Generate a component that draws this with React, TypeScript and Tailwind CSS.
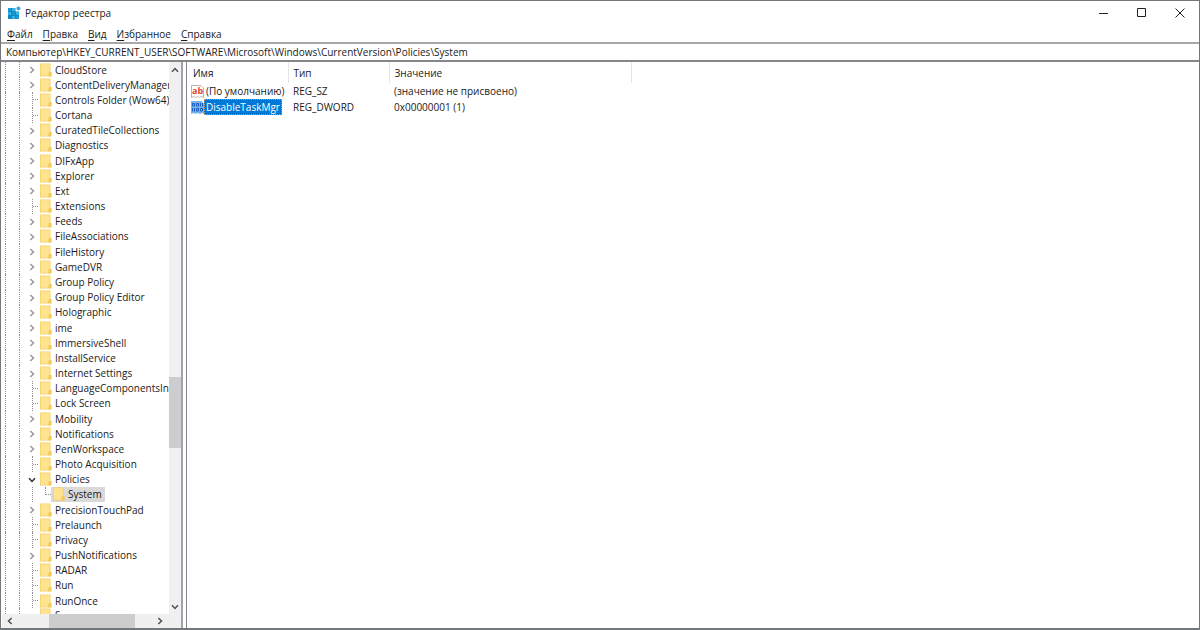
import clsx from 'clsx'

type Kind = 'closed' | 'open' | 'leaf' | 'child'

const keys: { name: string; kind: Kind }[] = [
  { name: 'CloudStore', kind: 'closed' },
  { name: 'ContentDeliveryManager', kind: 'closed' },
  { name: 'Controls Folder (Wow64)', kind: 'leaf' },
  { name: 'Cortana', kind: 'leaf' },
  { name: 'CuratedTileCollections', kind: 'closed' },
  { name: 'Diagnostics', kind: 'closed' },
  { name: 'DIFxApp', kind: 'closed' },
  { name: 'Explorer', kind: 'closed' },
  { name: 'Ext', kind: 'closed' },
  { name: 'Extensions', kind: 'leaf' },
  { name: 'Feeds', kind: 'closed' },
  { name: 'FileAssociations', kind: 'closed' },
  { name: 'FileHistory', kind: 'closed' },
  { name: 'GameDVR', kind: 'closed' },
  { name: 'Group Policy', kind: 'closed' },
  { name: 'Group Policy Editor', kind: 'closed' },
  { name: 'Holographic', kind: 'closed' },
  { name: 'ime', kind: 'closed' },
  { name: 'ImmersiveShell', kind: 'closed' },
  { name: 'InstallService', kind: 'closed' },
  { name: 'Internet Settings', kind: 'closed' },
  { name: 'LanguageComponentsIn', kind: 'leaf' },
  { name: 'Lock Screen', kind: 'leaf' },
  { name: 'Mobility', kind: 'closed' },
  { name: 'Notifications', kind: 'closed' },
  { name: 'PenWorkspace', kind: 'closed' },
  { name: 'Photo Acquisition', kind: 'leaf' },
  { name: 'Policies', kind: 'open' },
  { name: 'System', kind: 'child' },
  { name: 'PrecisionTouchPad', kind: 'closed' },
  { name: 'Prelaunch', kind: 'leaf' },
  { name: 'Privacy', kind: 'leaf' },
  { name: 'PushNotifications', kind: 'closed' },
  { name: 'RADAR', kind: 'leaf' },
  { name: 'Run', kind: 'leaf' },
  { name: 'RunOnce', kind: 'leaf' },
]

const menu = ['Файл', 'Правка', 'Вид', 'Избранное', 'Справка']

const values = [
  { name: '(По умолчанию)', type: 'REG_SZ', data: '(значение не присвоено)', selected: false },
  { name: 'DisableTaskMgr', type: 'REG_DWORD', data: '0x00000001 (1)', selected: true },
]

function RegeditIcon() {
  return (
    <svg width="14" height="14" viewBox="0 0 14 14" className="shrink-0">
      <path d="M1 2h7.500v3.500H12V13H1z" fill="#1487bd" />
      <path d="M1 2h3v3H1zM5 6h3v3H5zM9 10h3v3H9z" fill="#1b9ad2" />
      <path d="M5 2h3v3H5zM1 6h3v3H1zM5 10h3v3H5zM9 6h3v3H9z" fill="#35b4e6" />
      <path d="M9.500 1.500 12 .300l1.700 2-1.500 2.200-2.500-.8z" fill="#35a4d6" />
    </svg>
  )
}

function Folder() {
  return (
    <svg width="12" height="14" viewBox="0 0 12 14" className="shrink-0">
      <path d="M0 .5h10.500v8.500h.9v4.500H0z" fill="#f4cf63" />
      <path d="M.7 1.200H9.800v11.600H.7z" fill="#ffe391" />
      <path d="M9 9h2.400v4.300H8z" fill="#f1ca58" />
    </svg>
  )
}

function Chevron({ className }: { className?: string }) {
  return (
    <svg width="8" height="8" viewBox="0 0 8 8" fill="none" stroke="currentColor" strokeWidth="1.5" className={clsx('shrink-0', className)}>
      <path d="M2.300 1 5.500 4 2.300 7" />
    </svg>
  )
}

function StringIcon() {
  return (
    <svg width="13" height="13" viewBox="0 0 13 13" className="shrink-0">
      <path d="M.5.500h9.500l2.500 2.500v9.500l-2-1-2 1-2-1-2 1-2-1-2 1z" fill="#fff" stroke="#b5b5b5" />
      <text x="1" y="8.500" fontSize="9" fontWeight="700" fill="#e0482c" fontFamily="Open Sans, sans-serif">ab</text>
    </svg>
  )
}

function BinaryIcon() {
  return (
    <svg width="13" height="13" viewBox="0 0 13 13" className="shrink-0">
      <path d="M0 0h10.500L13 2.500V13l-2-1-2 1-2.500-1-2 1-2-1L0 13z" fill="#76b2ea" />
      <g fill="none" stroke="#1a5fc8" strokeWidth="1">
        <path d="M1.500 2.500h2v2.500h-2zM5.500 2.500h2v2.500h-2zM9.500 2v3.500M11.500 2v3.500" />
        <path d="M1.500 7v3.500M3.500 7v3.500M5.500 7.500h2v2.500h-2zM9.500 7.500h2v2.500h-2z" />
      </g>
    </svg>
  )
}

function TreeRow({ name, kind }: { name: string; kind: Kind }) {
  return (
    <li className="flex min-h-0 flex-1 items-stretch" role="treeitem" aria-selected={kind === 'child'}>
      <span className="ml-[3px] w-[14px] shrink-0 border-l border-dotted border-[#909090]" />
      <span className="w-[9px] shrink-0 border-l border-dotted border-[#909090]" />
      {(kind === 'closed' || kind === 'open') && (
        <button aria-label={name} className={clsx('flex w-[12px] shrink-0 items-center pt-px', kind === 'open' ? 'text-[#303030]' : 'text-[#9a9a9a]')}>
          <Chevron className={kind === 'open' ? 'rotate-90' : ''} />
        </button>
      )}
      {kind === 'leaf' && (
        <span className="ml-[4px] flex w-[8px] shrink-0 items-center border-l border-dotted border-[#909090]">
          <span className="w-[5px] border-t border-dotted border-[#909090]" />
        </span>
      )}
      {kind === 'child' && (
        <>
          <span className="ml-[4px] w-[13px] shrink-0 border-l border-dotted border-[#909090]" />
          <span className="mb-[7px] w-[6px] shrink-0 border-b border-l border-dotted border-[#909090]" />
        </>
      )}
      <button className={clsx('flex items-center whitespace-nowrap', kind === 'child' && 'bg-[#d9d9d9] pr-[3px] pl-[2px]')}>
        <Folder />
        <span className="ml-[3px]">{name}</span>
      </button>
    </li>
  )
}

export default function App() {
  return (
    <div className="flex h-screen flex-col overflow-hidden border border-b-2 border-[#73767a] bg-white font-['Open_Sans','Noto_Sans',sans-serif] text-[10px] leading-[14px] text-[#1a1a1a]">
      <header className="flex h-[24px] shrink-0 items-center pl-[6px]">
        <RegeditIcon />
        <h1 className="ml-[4px] flex-1">Редактор реестра</h1>
        <button aria-label="Свернуть" className="flex h-full w-[38px] items-center justify-center">
          <svg width="10" height="10"><path d="M0 5.500h9" stroke="#222" /></svg>
        </button>
        <button aria-label="Развернуть" className="flex h-full w-[38px] items-center justify-center">
          <svg width="10" height="10"><path d="M.5.500h8v8h-8z" fill="none" stroke="#222" /></svg>
        </button>
        <button aria-label="Закрыть" className="flex h-full w-[38px] items-center justify-center">
          <svg width="10" height="10"><path d="M.5.500l9 9M9.500.500l-9 9" stroke="#222" /></svg>
        </button>
      </header>

      <nav className="flex h-[17px] shrink-0 items-center gap-[10px] pl-[6px]">
        {menu.map((item) => (
          <button key={item}>
            <span className="underline underline-offset-2">{item[0]}</span>
            {item.slice(1)}
          </button>
        ))}
      </nav>

      <input
        aria-label="Адрес"
        defaultValue="Компьютер\HKEY_CURRENT_USER\SOFTWARE\Microsoft\Windows\CurrentVersion\Policies\System"
        className="h-[20px] w-full shrink-0 border-t-2 border-b-2 border-t-[#a8a8a8] border-b-[#85868a] bg-white pl-[5px] outline-none"
      />

      <main className="flex min-h-0 flex-1">
        <section className="flex w-[182px] shrink-0 flex-col border-r-2 border-[#a0a3aa] pl-px">
          <div className="flex min-h-0 flex-1">
            <ul role="tree" className="flex w-[167px] shrink-0 flex-col overflow-hidden">
              {keys.map((key) => (
                <TreeRow key={key.name} {...key} />
              ))}
              <li className="flex h-[6px] shrink-0 items-start overflow-hidden">
                <span className="ml-[3px] h-full w-[14px] border-l border-dotted border-[#909090]" />
                <span className="h-full w-[21px] border-l border-dotted border-[#909090]" />
                <Folder />
                <span className="ml-[3px]">S</span>
              </li>
            </ul>
            <div className="flex flex-1 flex-col bg-[#f0f0f0] text-[#505050]">
              <button aria-label="Вверх" className="flex h-[15px] items-center justify-center"><Chevron className="-rotate-90" /></button>
              <span className="flex-[301]" />
              <span className="flex-[71] bg-[#cdcdcd]" />
              <span className="flex-[151]" />
              <button aria-label="Вниз" className="flex h-[15px] items-center justify-center"><Chevron className="rotate-90" /></button>
            </div>
          </div>
          <div className="flex h-[14px] shrink-0 bg-[#f0f0f0] pr-[14px] text-[#505050]">
            <button aria-label="Влево" className="flex w-[15px] items-center justify-center"><Chevron className="rotate-180" /></button>
            <span className="flex-[32]" />
            <span className="flex-[86] bg-[#cdcdcd]" />
            <span className="flex-[17]" />
            <button aria-label="Вправо" className="flex w-[15px] items-center justify-center"><Chevron /></button>
          </div>
        </section>

        <section className="ml-[3px] min-w-0 flex-1 border-l border-[#85868a]">
          <table className="table-fixed border-collapse text-left">
            <colgroup>
              <col className="w-[101px]" />
              <col className="w-[101px]" />
              <col className="w-[242px]" />
            </colgroup>
            <thead>
              <tr className="h-[21px]">
                <th className="border-r border-[#e5e5e5] p-0 pl-[6px] font-normal">Имя</th>
                <th className="border-r border-[#e5e5e5] p-0 pl-[5px] font-normal">Тип</th>
                <th className="border-r border-[#e5e5e5] p-0 pl-[5px] font-normal">Значение</th>
              </tr>
            </thead>
            <tbody>
              {values.map((v) => (
                <tr key={v.name} className="h-[16px]">
                  <td className="p-0 pl-[4px]">
                    <div className="flex items-center whitespace-nowrap">
                      {v.selected ? <BinaryIcon /> : <StringIcon />}
                      <span className={clsx('border px-px', v.selected ? 'border-dotted border-[#d98a3c] bg-[#0078d7] text-white' : 'border-transparent')}>{v.name}</span>
                    </div>
                  </td>
                  <td className="p-0 pl-[5px]">{v.type}</td>
                  <td className="p-0 pl-[5px]">{v.data}</td>
                </tr>
              ))}
            </tbody>
          </table>
        </section>
      </main>
    </div>
  )
}
